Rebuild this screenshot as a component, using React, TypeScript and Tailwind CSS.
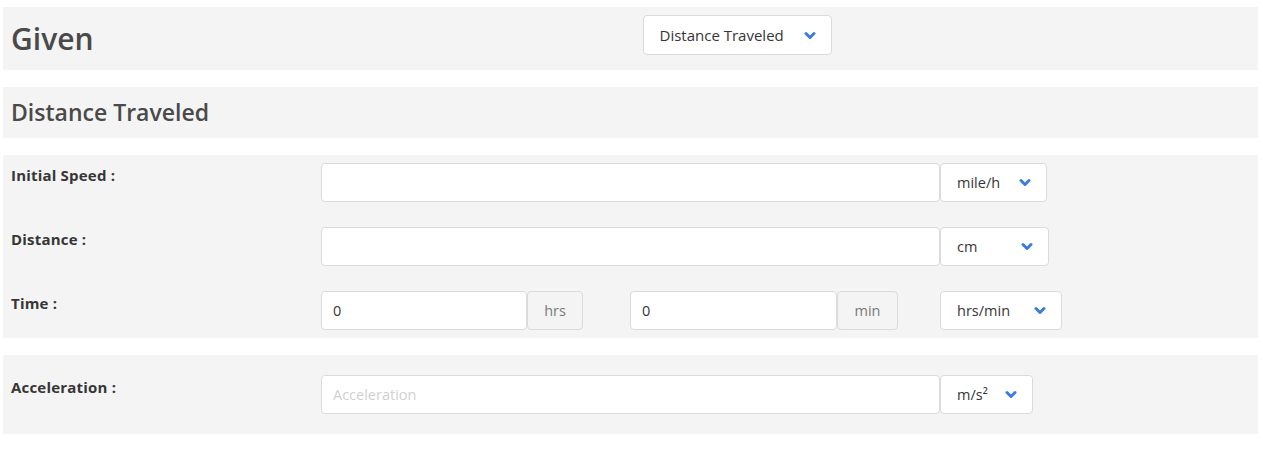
import React from "react";

const font = { fontFamily: "'Open Sans', 'Noto Sans', sans-serif" };

const Chevron = () => (
  <svg width="12" height="9" viewBox="0 0 12 9" className="shrink-0">
    <path d="M2 2.5 L6 6.5 L10 2.5" fill="none" stroke="#3b7ddd" strokeWidth="3" strokeLinecap="round" strokeLinejoin="round" />
  </svg>
);

interface UnitSelectProps {
  label: string;
  width: string;
}

const UnitSelect: React.FC<UnitSelectProps> = ({ label, width }) => (
  <div className={`${width} h-[39px] flex items-center justify-between pl-4 pr-[15px] bg-white border border-[#dbdbdb] rounded text-[14.5px] text-[#363636]`}>
    <span>{label}</span>
    <Chevron />
  </div>
);

const Field = ({ value, placeholder, className = "" }: { value?: string; placeholder?: string; className?: string }) => (
  <input
    readOnly
    defaultValue={value}
    placeholder={placeholder}
    className={`h-[39px] pl-[11px] pr-3 bg-white border border-[#dbdbdb] rounded text-[14.5px] text-[#363636] placeholder:text-[#d0d0d0] outline-none ${className}`}
    style={font}
  />
);

const Addon = ({ label, width }: { label: string; width: string }) => (
  <div className={`${width} h-[39px] flex items-center justify-center bg-[#f4f4f4] border border-[#dbdbdb] rounded text-[14.5px] text-[#7a7a7a]`}>
    {label}
  </div>
);

const Row = ({ label, children }: { label: string; children: React.ReactNode }) => (
  <div className="flex">
    <div className="w-[310px] pt-[2px] leading-5 text-[15px] tracking-[0.2px] font-bold text-[#363636]">{label}</div>
    <div className="flex items-center">{children}</div>
  </div>
);

export default function App() {
  return (
    <div className="bg-white w-[1263px] h-[473px] pt-[7px] pl-[3px]" style={font}>
      <div className="w-[1255px] flex flex-col gap-[17px]">
        <div className="h-[63px] bg-[#f4f4f4] grid grid-cols-2">
          <div className="flex items-center pl-2">
            <h1 className="text-[30px] font-semibold text-[#4a4a4a]">Given</h1>
          </div>
          <div className="pl-3 pt-2">
            <div className="w-[189px] h-10 flex items-center justify-between pl-4 pr-[15px] bg-white border border-[#dbdbdb] rounded text-[15px] text-[#363636]">
              <span>Distance Traveled</span>
              <Chevron />
            </div>
          </div>
        </div>

        <div className="h-[51px] bg-[#f4f4f4] flex items-center pl-2">
          <h2 className="text-[23px] font-semibold text-[#4a4a4a]">Distance Traveled</h2>
        </div>

        <div className="bg-[#f4f4f4] py-2 pl-2 flex flex-col gap-[25px]">
          <Row label="Initial Speed :">
            <Field className="w-[619px]" />
            <UnitSelect label="mile/h" width="w-[107px]" />
          </Row>
          <Row label="Distance :">
            <Field className="w-[619px]" />
            <UnitSelect label="cm" width="w-[109px]" />
          </Row>
          <Row label="Time :">
            <Field value="0" className="w-[206px]" />
            <Addon label="hrs" width="w-[56px]" />
            <Field value="0" className="w-[207px] ml-[47px]" />
            <Addon label="min" width="w-[61px]" />
            <div className="ml-[42px]">
              <UnitSelect label="hrs/min" width="w-[122px]" />
            </div>
          </Row>
        </div>

        <div className="bg-[#f4f4f4] py-5 pl-2">
          <Row label="Acceleration :">
            <Field placeholder="Acceleration" className="w-[619px]" />
            <UnitSelect label="m/s²" width="w-[93px]" />
          </Row>
        </div>
      </div>
    </div>
  );
}
